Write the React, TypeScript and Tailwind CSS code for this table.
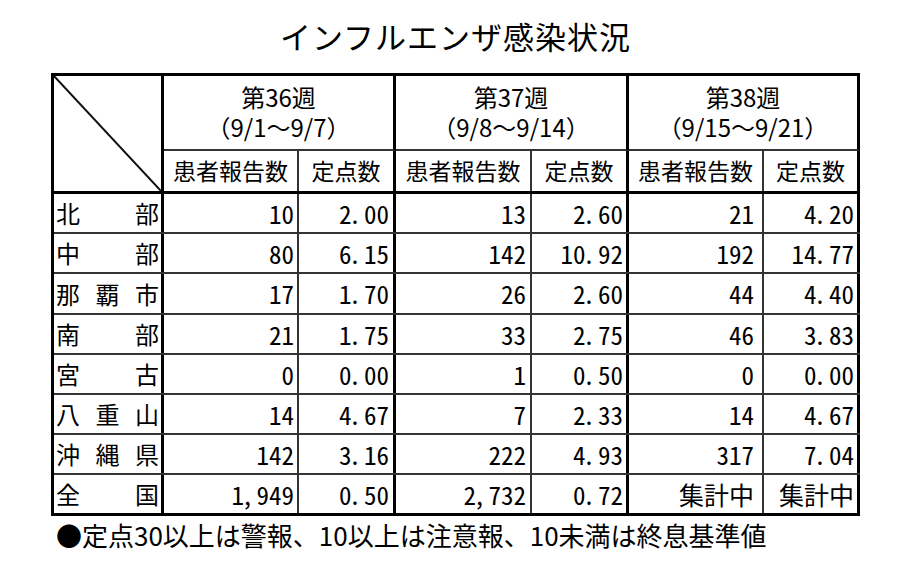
import React from "react";

const font = "font-['Noto_Sans_CJK_JP','Noto_Sans_CJK_SC',sans-serif]";

type Row = { label: string[]; v: string[] };

const rows: Row[] = [
  { label: ["北", "部"], v: ["10", "2.00", "13", "2.60", "21", "4.20"] },
  { label: ["中", "部"], v: ["80", "6.15", "142", "10.92", "192", "14.77"] },
  { label: ["那", "覇", "市"], v: ["17", "1.70", "26", "2.60", "44", "4.40"] },
  { label: ["南", "部"], v: ["21", "1.75", "33", "2.75", "46", "3.83"] },
  { label: ["宮", "古"], v: ["0", "0.00", "1", "0.50", "0", "0.00"] },
  { label: ["八", "重", "山"], v: ["14", "4.67", "7", "2.33", "14", "4.67"] },
  { label: ["沖", "縄", "県"], v: ["142", "3.16", "222", "4.93", "317", "7.04"] },
  { label: ["全", "国"], v: ["1,949", "0.50", "2,732", "0.72", "集計中", "集計中"] },
];

const rowH = ["h-[40px]", "h-[40px]", "h-[41px]", "h-[40px]", "h-[40px]", "h-[40px]", "h-[40px]", "h-[41px]"];

const colCls = [
  "w-[135px] border-r-[2px] border-r-[#333] pr-[3px]",
  "w-[97px] border-r-[3px] border-r-black pr-[4px]",
  "w-[136px] border-r-[2px] border-r-[#333] pr-[4px]",
  "w-[97px] border-r-[3px] border-r-black pr-[3px]",
  "w-[135px] border-r-[2px] border-r-[#333] pr-[8px]",
  "w-[96px] border-r-[3px] border-r-black pr-[3px]",
];

const weeks = [
  { t: "第36週", d: "（9/1～9/7）" },
  { t: "第37週", d: "（9/8～9/14）" },
  { t: "第38週", d: "（9/15～9/21）" },
];
const weekW = ["w-[232px]", "w-[233px]", "w-[231px]"];
const subA = ["w-[135px]", "w-[136px]", "w-[135px]"];
const subB = ["w-[97px]", "w-[97px]", "w-[96px]"];

function Num({ v }: { v: string }) {
  const parts = v.split(/([.,])/);
  return (
    <>
      {parts.map((p, i) =>
        p === "." || p === "," ? (
          <span key={i} className="inline-block w-[12.5px] text-left [font-feature-settings:normal]">
            {p}
          </span>
        ) : (
          <span key={i}>{p}</span>
        )
      )}
    </>
  );
}

export default function App() {
  return (
    <div className={`w-[901px] h-[578px] bg-white text-black ${font} overflow-hidden`}>
      <div className="pt-[20px] h-[73px]">
        <div className="text-[31px] leading-[31px] tracking-[1px] text-center pl-[10px]">
          インフルエンザ感染状況
        </div>
      </div>
      <div className="ml-[51px] w-[809px] border-l-[3px] border-t-[3px] border-black">
        {/* header */}
        <div className="flex">
          <div className="relative w-[110px] h-[118px] border-r-[3px] border-b-[3px] border-black">
            <svg className="absolute inset-0 w-full h-full" preserveAspectRatio="none">
              <line x1="0" y1="0" x2="100%" y2="100%" stroke="#111" strokeWidth="2" />
            </svg>
          </div>
          {weeks.map((w, i) => (
            <div key={i} className={`${weekW[i]} flex flex-col`}>
              <div className="h-[75px] border-r-[3px] border-r-black border-b-[2px] border-b-[#333] flex flex-col items-center justify-center gap-[6px] text-[24px] leading-[24px] pb-[1px]">
                <div>{w.t}</div>
                <div>{w.d}</div>
              </div>
              <div className="flex h-[43px] border-b-[3px] border-b-black text-[23px] leading-[23px]">
                <div className={`${subA[i]} border-r-[2px] border-r-[#333] flex items-center justify-center pb-[1px]`}>
                  患者報告数
                </div>
                <div className={`${subB[i]} border-r-[3px] border-r-black flex items-center justify-center pb-[1px]`}>
                  定点数
                </div>
              </div>
            </div>
          ))}
        </div>
        {/* body */}
        {rows.map((r, ri) => (
          <div
            key={ri}
            className={`flex ${rowH[ri]} ${ri === rows.length - 1 ? "border-b-[3px] border-b-black" : "border-b-[2px] border-b-[#333]"}`}
          >
            <div className="w-[110px] border-r-[3px] border-r-black flex items-center justify-between px-[2px] text-[24px] leading-[24px]">
              {r.label.map((c, ci) => (
                <span key={ci}>{c}</span>
              ))}
            </div>
            {r.v.map((v, vi) => (
              <div
                key={vi}
                className={`${colCls[vi]} flex items-center justify-end text-[25px] leading-[25px] [font-feature-settings:'hwid']`}
              >
                <Num v={v} />
              </div>
            ))}
          </div>
        ))}
      </div>
      <div className="ml-[51px] mt-[6px] pl-[5px] text-[26px] leading-[26px]">
        ●定点30以上は警報、10以上は注意報、10未満は終息基準値
      </div>
    </div>
  );
}
